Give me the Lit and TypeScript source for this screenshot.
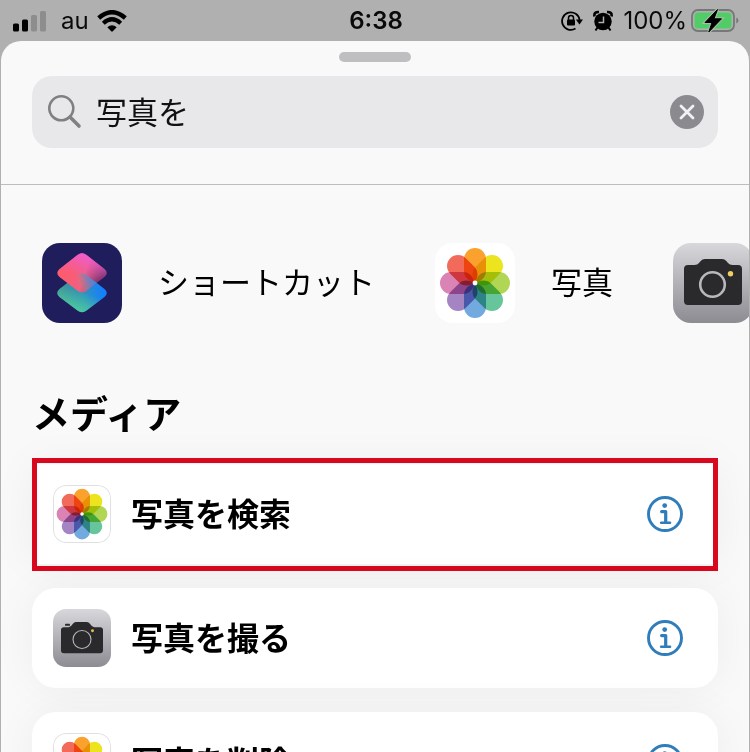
import { LitElement, html, svg, css } from "lit";
import { customElement, property, state } from "lit/decorators.js";
import { classMap } from "lit/directives/class-map.js";

type AppName = "shortcuts" | "photos" | "camera";

const PETALS = ["#fba22e", "#ece41e", "#b0d654", "#66c59b", "#72a9de", "#a584c4", "#d984b4", "#f26a5a"];

const LOWER_TILE =
  "M35.5 32Q40 28.600 44.500 32L62.500 46Q67 50 62.500 54L44.500 67.500Q40 71 35.500 67.500L17.500 54Q13 50 17.500 46Z";
const UPPER_TILE =
  "M35.500 12Q40 8.600 44.500 12L62.500 26Q67 30 62.500 34L44.500 47.800Q40 51.200 35.500 47.800L17.500 34Q13 30 17.500 26Z";

@customElement("app-icon")
export class AppIcon extends LitElement {
  @property() name: AppName = "photos";
  @property({ type: Boolean }) small = false;

  static styles = css`
    :host {
      display: block;
      flex: none;
      width: 80px;
      height: 80px;
      border-radius: 18px;
      overflow: hidden;
    }
    :host([small]) {
      width: 58px;
      height: 58px;
      border-radius: 13px;
    }
    svg {
      display: block;
      width: 100%;
      height: 100%;
    }
    .petal {
      mix-blend-mode: multiply;
    }
    .flower {
      isolation: isolate;
    }
  `;

  private photos() {
    return svg`
      <rect width="80" height="80" fill="#fff"></rect>
      ${this.small
        ? svg`<rect x=".7" y=".7" width="78.6" height="78.6" rx="17.4" fill="none" stroke="#e0e0e2" stroke-width="1.4"></rect>`
        : null}
      <g class="flower">
        ${PETALS.map(
          (c, i) => svg`<rect class="petal" x="29" y="5" width="22" height="34" rx="11" fill=${c}
            transform="rotate(${i * 45} 40 40)"></rect>`
        )}
      </g>
      <circle cx="40" cy="40" r="2.4" fill="#fff"></circle>`;
  }

  private shortcuts() {
    return svg`
      <defs>
        <linearGradient id="low" gradientUnits="userSpaceOnUse" x1="20" y1="56" x2="60" y2="46">
          <stop offset="0" stop-color="#3f8f98"></stop>
          <stop offset=".5" stop-color="#3196b8"></stop>
          <stop offset="1" stop-color="#1680fa"></stop>
        </linearGradient>
        <linearGradient id="lowGlow" gradientUnits="userSpaceOnUse" x1="44" y1="50" x2="36" y2="71">
          <stop offset="0" stop-color="#4fd0a0" stop-opacity="0"></stop>
          <stop offset="1" stop-color="#4fd0a0"></stop>
        </linearGradient>
        <linearGradient id="high" gradientUnits="userSpaceOnUse" x1="30" y1="24" x2="63" y2="35">
          <stop offset="0" stop-color="#fb5c70"></stop>
          <stop offset=".4" stop-color="#ee6088"></stop>
          <stop offset="1" stop-color="#5a2868"></stop>
        </linearGradient>
        <linearGradient id="highGlow" gradientUnits="userSpaceOnUse" x1="44" y1="10" x2="38" y2="34">
          <stop offset="0" stop-color="#f05cdc"></stop>
          <stop offset="1" stop-color="#f05cb0" stop-opacity="0"></stop>
        </linearGradient>
        <linearGradient id="over" gradientUnits="userSpaceOnUse" x1="36" y1="46" x2="54" y2="40">
          <stop offset="0" stop-color="#ff6a5c" stop-opacity="0"></stop>
          <stop offset=".45" stop-color="#9a7ea0" stop-opacity=".8"></stop>
          <stop offset="1" stop-color="#3c88e8"></stop>
        </linearGradient>
        <clipPath id="shared"><path d=${UPPER_TILE}></path></clipPath>
      </defs>
      <rect width="80" height="80" fill="#1f1d5c"></rect>
      <path d=${LOWER_TILE} fill="url(#low)"></path>
      <path d=${LOWER_TILE} fill="url(#lowGlow)"></path>
      <path d=${UPPER_TILE} fill="url(#high)"></path>
      <path d=${UPPER_TILE} fill="url(#highGlow)"></path>
      <g clip-path="url(#shared)"><path d=${LOWER_TILE} fill="url(#over)"></path></g>`;
  }

  private camera() {
    return svg`
      <defs>
        <linearGradient id="metal" x1="0" y1="0" x2="0" y2="1">
          <stop offset="0" stop-color="#d8d7dc"></stop>
          <stop offset="1" stop-color="#8d8c92"></stop>
        </linearGradient>
      </defs>
      <rect width="80" height="80" fill="url(#metal)"></rect>
      ${this.small
        ? svg`
          <path d="M15 25h6.500q2.500-.2 4-2.200l2-2.600q1.500-2.200 4.200-2.200h15q2.700 0 4.200 2.200l2 2.600q1.500 2 4 2.200H65q4 0 4 4V57q0 4-4 4H15q-4 0-4-4V29q0-4 4-4z" fill="#2a2a2c"></path>
          <rect x="16.500" y="20.500" width="7" height="2.600" rx="1.200" fill="#2a2a2c"></rect>
          <circle cx="40" cy="42" r="12.400" fill="none" stroke="#b8b7bb" stroke-width="1.500"></circle>
          <circle cx="54.500" cy="30" r="2" fill="#e8bd4c"></circle>`
        : svg`
          <path d="M16 22h5.500q3-.2 4.500-2l1.700-2q1.600-2 4.300-2h17q2.700 0 4.300 2l1.700 2q1.500 1.800 4.500 2H65q4 0 4 4V58q0 4-4 4H15q-4 0-4-4V26q0-4 4-4z" fill="#2a2a2c"></path>
          <circle cx="39.500" cy="41.500" r="12.300" fill="none" stroke="#b8b7bc" stroke-width="2.600"></circle>
          <circle cx="57.500" cy="30.700" r="2.700" fill="#f0ce62"></circle>`}`;
  }

  render() {
    const art =
      this.name === "photos" ? this.photos() : this.name === "shortcuts" ? this.shortcuts() : this.camera();
    return html`<svg viewBox="0 0 80 80" aria-hidden="true">${art}</svg>`;
  }
}

@customElement("status-bar")
export class StatusBar extends LitElement {
  static styles = css`
    :host {
      display: grid;
      grid-template-columns: 1fr auto 1fr;
      align-items: center;
      height: 41px;
      padding: 0 11px 0 13px;
      box-sizing: border-box;
      font: 24px/28px Inter, "Noto Sans", sans-serif;
      color: #0a0a0a;
    }
    .side {
      display: flex;
      align-items: center;
    }
    .left {
      gap: 14px;
    }
    .right {
      justify-content: flex-end;
      gap: 10px;
    }
    .carrier {
      display: flex;
      align-items: center;
      gap: 8px;
    }
    .charge {
      display: flex;
      align-items: center;
      gap: 4px;
    }
    .time {
      font-weight: 600;
    }
    svg {
      display: block;
    }
  `;

  render() {
    return html`
      <div class="side left">
        <svg width="34" height="22" viewBox="0 0 34 22" aria-hidden="true">
          <rect x="0" y="13.500" width="6" height="8" rx="1.500"></rect>
          <rect x="9" y="9.500" width="6" height="12" rx="1.500"></rect>
          <rect x="18" y="5" width="6" height="16.500" rx="1.500" fill="#8d8d8d"></rect>
          <rect x="27" y="1" width="6" height="20.500" rx="1.500" fill="#8d8d8d"></rect>
        </svg>
        <span class="carrier">
          au
          <svg width="30" height="22" viewBox="0 0 30 22" aria-hidden="true">
            <path d="M1.700 8Q15-3.600 28.300 8" fill="none" stroke="#000" stroke-width="4.400"></path>
            <path d="M6.300 13.200Q15 5.400 23.700 13.200" fill="none" stroke="#000" stroke-width="4.200"></path>
            <path d="M10.300 17.300Q15 13.300 19.700 17.300L15.800 21.300Q15 22 14.200 21.300Z"></path>
          </svg>
        </span>
      </div>
      <span class="time">6:38</span>
      <div class="side right">
        <svg width="22" height="20" viewBox="0 0 22 20" aria-hidden="true">
          <path d="M14.500 17.600A8.800 8.800 0 1 1 18.600 9" fill="none" stroke="#000" stroke-width="1.800"></path>
          <path d="M14.800 8.500H22L18.500 13.500Z"></path>
          <rect x="6" y="8.600" width="8" height="6" rx="1"></rect>
          <path d="M7.500 9V7a2.500 2.500 0 0 1 5 0v2" fill="none" stroke="#000" stroke-width="1.500"></path>
        </svg>
        <svg width="20" height="22" viewBox="0 0 20 22" aria-hidden="true">
          <circle cx="10" cy="11.500" r="8.700"></circle>
          <path d="M1.500 6.500Q.5 1.800 6 2M18.500 6.500Q19.500 1.800 14 2" fill="none" stroke="#000" stroke-width="2.600"></path>
          <path d="M4.500 17.500L2.500 20.500M15.500 17.500l2 3" stroke="#000" stroke-width="2"></path>
          <path d="M10.500 6.500v6H5.500" fill="none" stroke="#b0b0b0" stroke-width="1.500"></path>
        </svg>
        <span class="charge">
          100%
          <svg width="48" height="24" viewBox="0 0 48 24" aria-hidden="true">
            <rect x="1" y="1" width="42" height="21" rx="6" fill="none" stroke="#757877" stroke-width="1.800"></rect>
            <rect x="3.500" y="3.500" width="37" height="16" rx="3.500" fill="#51cc66"></rect>
            <path d="M45.300 8.500Q47.500 9.500 47.500 11.500T45.300 14.500Z" fill="#757877"></path>
            <path d="M26.500.5L14 13.500h7L17.800 23L30.500 9.800h-7.500Z" stroke="#a5bfa8" stroke-width="3"></path>
            <path d="M26.500.5L14 13.500h7L17.800 23L30.500 9.800h-7.500Z" stroke="#000" stroke-width="1" stroke-linejoin="round"></path>
          </svg>
        </span>
      </div>
    `;
  }
}

@customElement("app-root")
export class AppRoot extends LitElement {
  @state() private query = "写真を";

  private apps: { name: AppName; label: string }[] = [
    { name: "shortcuts", label: "ショートカット" },
    { name: "photos", label: "写真" },
    { name: "camera", label: "" },
  ];

  private actions: { icon: AppName; title: string; marked?: boolean }[] = [
    { icon: "photos", title: "写真を検索", marked: true },
    { icon: "camera", title: "写真を撮る" },
    { icon: "photos", title: "写真を削除" },
  ];

  static styles = css`
    :host {
      display: flex;
      flex-direction: column;
      height: 100vh;
      overflow: hidden;
      background: #b0b0b0;
      color: #000;
      font-family: "Noto Sans CJK JP", sans-serif;
    }
    button {
      padding: 0;
      border: 0;
      background: none;
      color: inherit;
      font: inherit;
      text-align: left;
      cursor: pointer;
    }
    svg {
      display: block;
      flex: none;
    }
    .sheet {
      flex: 1;
      min-height: 0;
      margin: 0 1px;
      overflow: hidden;
      border-radius: 20px 20px 0 0;
      background: #f9f9f9;
    }
    .top {
      padding: 11px 31px 36px;
      border-bottom: 1px solid #bdbdc0;
    }
    .grabber {
      width: 72px;
      height: 10px;
      margin: 0 auto 14px;
      border-radius: 5px;
      background: #bfbfc1;
    }
    .search {
      display: flex;
      align-items: center;
      gap: 14px;
      height: 72px;
      padding: 0 14px 0 16px;
      border-radius: 20px;
      background: #e8e8ea;
    }
    .field {
      flex: 1;
      min-width: 0;
      height: 48px;
      padding: 0 0 4px;
      border: 0;
      outline: 0;
      background: none;
      color: #111;
      font: 31px/44px "Noto Sans CJK JP", sans-serif;
    }
    .field::-webkit-search-cancel-button {
      display: none;
    }
    .apps {
      display: flex;
      gap: 60px;
      padding: 58px 0 0 41px;
      overflow: hidden;
    }
    .app {
      display: flex;
      flex: none;
      align-items: center;
      gap: 36px;
      font-size: 31px;
      line-height: 44px;
      white-space: nowrap;
    }
    .label {
      padding-bottom: 4px;
    }
    h1 {
      margin: 62px 0 26px;
      padding: 0 31px;
      font-size: 38px;
      line-height: 53px;
      font-weight: 700;
    }
    .list {
      display: flex;
      flex-direction: column;
      gap: 24px;
      margin: 0;
      padding: 0 31px;
      list-style: none;
    }
    .card {
      position: relative;
      display: flex;
      align-items: center;
      height: 100px;
      padding: 0 35px 0 21px;
      box-sizing: border-box;
      border-radius: 24px;
      background: #fff;
      box-shadow: 0 0 44px rgba(0, 0, 0, 0.05);
    }
    .marked {
      border-radius: 0;
    }
    .marked::after {
      content: "";
      position: absolute;
      inset: -6px 0 -7px;
      border: 5px solid #d8091f;
      pointer-events: none;
    }
    .action {
      display: flex;
      flex: 1;
      align-items: center;
      gap: 20px;
      font-size: 32px;
      line-height: 44px;
      font-weight: 700;
    }
  `;

  render() {
    return html`
      <status-bar></status-bar>
      <main class="sheet">
        <div class="top">
          <div class="grabber"></div>
          <div class="search">
            <svg width="34" height="34" viewBox="0 0 34 34" fill="none" stroke="#808084" aria-hidden="true">
              <circle cx="13.300" cy="13.300" r="12" stroke-width="2.600"></circle>
              <path d="M22 22L31 31" stroke-width="3.600" stroke-linecap="round"></path>
            </svg>
            <input
              class="field"
              type="search"
              aria-label="検索"
              .value=${this.query}
              @input=${(e: Event) => (this.query = (e.target as HTMLInputElement).value)}
            />
            <button aria-label="消去" @click=${() => (this.query = "")}>
              <svg width="34" height="34" viewBox="0 0 34 34" aria-hidden="true">
                <circle cx="17" cy="17" r="17" fill="#8b8b8f"></circle>
                <path d="M11 11L23 23M23 11L11 23" stroke="#f2f2f4" stroke-width="2.800" stroke-linecap="round"></path>
              </svg>
            </button>
          </div>
        </div>
        <nav class="apps">
          ${this.apps.map(
            (a) => html`
              <button class="app" aria-label=${a.label || "カメラ"}>
                <app-icon name=${a.name}></app-icon>
                ${a.label ? html`<span class="label">${a.label}</span>` : null}
              </button>
            `
          )}
        </nav>
        <h1>メディア</h1>
        <ul class="list">
          ${this.actions.map(
            (a) => html`
              <li class=${classMap({ card: true, marked: !!a.marked })}>
                <button class="action">
                  <app-icon small name=${a.icon}></app-icon>
                  <span class="label">${a.title}</span>
                </button>
                <button aria-label="情報">
                  <svg width="36" height="36" viewBox="0 0 36 36" fill="none" stroke="#2f7dba" aria-hidden="true">
                    <circle cx="18" cy="18" r="16.500" stroke-width="2.900"></circle>
                    <circle cx="17.700" cy="9.600" r="2.400" fill="#2f7dba" stroke="none"></circle>
                    <path d="M14.600 15.600H18.700V26.500" stroke-width="3.200" stroke-linecap="round" stroke-linejoin="round"></path>
                    <path d="M14.200 26.800H23" stroke-width="2.600" stroke-linecap="round"></path>
                  </svg>
                </button>
              </li>
            `
          )}
        </ul>
      </main>
    `;
  }
}
